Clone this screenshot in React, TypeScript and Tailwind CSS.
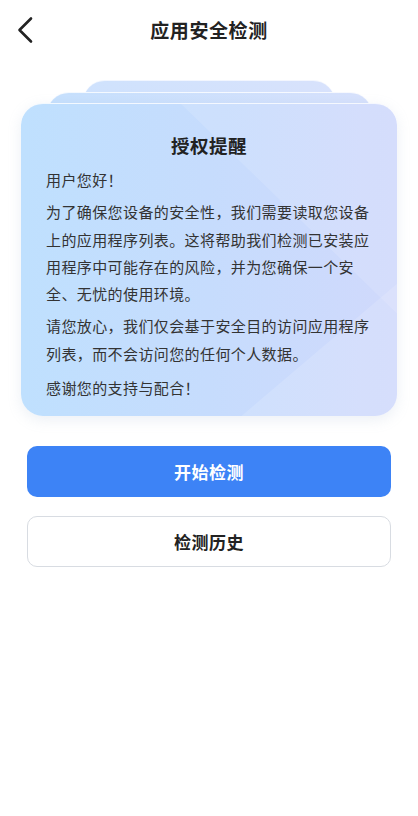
const paragraphs = [
  "用户您好！",
  "为了确保您设备的安全性，我们需要读取您设备上的应用程序列表。这将帮助我们检测已安装应用程序中可能存在的风险，并为您确保一个安全、无忧的使用环境。",
  "请您放心，我们仅会基于安全目的访问应用程序列表，而不会访问您的任何个人数据。",
  "感谢您的支持与配合！",
];

const App = () => {
  return (
    <div className="min-h-[816px] w-[418px] bg-white font-['Noto_Sans_CJK_SC',sans-serif] text-[#222]">
      {/* header */}
      <div className="relative flex h-[60px] items-center justify-center">
        <button type="button" className="absolute left-[14px] top-[15px] text-[#222]">
          <svg width="24" height="30" viewBox="0 0 24 30" fill="none">
            <path d="M17 3.5 L5.5 15 L17 26.5" stroke="currentColor" strokeWidth="2.6" strokeLinecap="round" strokeLinejoin="round" />
          </svg>
        </button>
        <h1 className="text-[19px] font-bold tracking-[0.6px]">应用安全检测</h1>
      </div>

      {/* stacked cards */}
      <div className="mt-[20px] flex flex-col">
        <div className="ml-[83px] h-[23px] w-[252px] rounded-t-[22px] border-t border-white/70 bg-gradient-to-r from-[#cfe2fd] to-[#d8e2fc]" />
        <div className="-mt-[11px] ml-[47px] h-[22px] w-[325px] rounded-t-[22px] border-t border-white/80 bg-gradient-to-r from-[#c6e0fd] to-[#d7e1fc]" />
        <div className="relative -mt-[11px] mx-[21px] overflow-hidden rounded-[22px] border-t border-white/80 bg-gradient-to-r from-[#bfe0fe] via-[#c6dcfd] to-[#d0d9fc] px-[25px] pb-[15px] pt-[28px] shadow-[0_4px_14px_rgba(150,170,200,0.18)]">
          <svg className="pointer-events-none absolute inset-0 h-full w-full" viewBox="0 0 376 313" preserveAspectRatio="none">
            <polygon points="160,0 376,0 376,210" fill="#ffffff" opacity="0.12" />
            <polygon points="376,180 220,313 376,313" fill="#ffffff" opacity="0.14" />
          </svg>
          <h2 className="relative mb-[8px] text-center text-[18.5px] font-bold leading-[26px] tracking-[0.5px] text-[#222]">
            授权提醒
          </h2>
          {paragraphs.map((p, i) => (
            <p
              key={i}
              className="relative mb-[5px] text-[15px] leading-[27.3px] tracking-[0.4px] text-[#333] last:mb-0 last:mt-[7px]"
            >
              {p}
            </p>
          ))}
        </div>
      </div>

      {/* actions */}
      <div className="mx-[27px] mt-[30px] flex flex-col gap-[19px]">
        <button
          type="button"
          className="h-[51px] rounded-[10px] bg-[#3d83f6] text-[17px] font-bold tracking-[0.5px] text-white"
        >
          开始检测
        </button>
        <button
          type="button"
          className="h-[51px] rounded-[10px] border border-[#d8dce2] bg-white text-[17px] font-bold tracking-[0.5px] text-[#222]"
        >
          检测历史
        </button>
      </div>
    </div>
  );
};

export default App;
